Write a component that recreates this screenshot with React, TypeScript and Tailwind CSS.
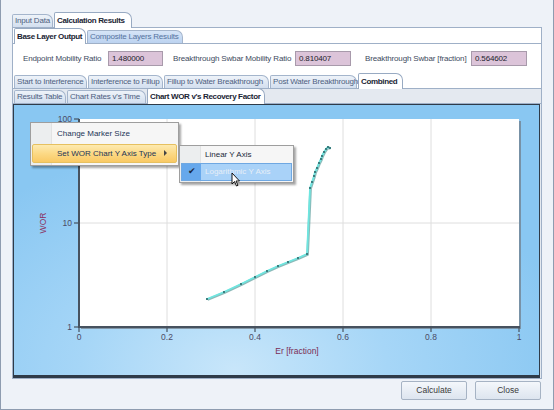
import React from "react";

type TabProps = { label: string; selected?: boolean; w: number; blue?: boolean };

function Tab({ label, selected, w, blue }: TabProps) {
  if (selected) {
    return (
      <div
        style={{ width: w }}
        className="relative z-10 -mb-px h-[16px] shrink-0 whitespace-nowrap rounded-tl-[2px] rounded-tr-[7px] border border-b-0 border-[#98aac2] bg-white px-[2px] pt-[1px] text-[8px] font-bold leading-[13px] tracking-[-0.35px] text-[#1a2433]"
      >
        {label}
      </div>
    );
  }
  return (
    <div
      style={{ width: w }}
      className={
        "h-[13px] shrink-0 whitespace-nowrap rounded-tl-[2px] rounded-tr-[7px] border border-b-0 border-[#a4b5cc] px-[2px] text-[8px] leading-[12px] tracking-[-0.2px] " +
        (blue
          ? "bg-gradient-to-b from-[#d6e5f7] to-[#bcd3f0] text-[#5573a0]"
          : "bg-gradient-to-b from-[#eef3f9] to-[#d3dfef] text-[#4d6080]")
      }
    >
      {label}
    </div>
  );
}

function Field({ value, w }: { value: string; w: number }) {
  return (
    <div
      style={{ width: w }}
      className="h-[15px] shrink-0 border border-[#a89aab] bg-[#dcc4d9] pl-[3px] text-[8px] leading-[13px] text-[#1c1c2c]"
    >
      {value}
    </div>
  );
}

function Chart() {
  const lower = [
    [193, 194],
    [210, 187],
    [227, 179],
    [241, 172],
    [253, 166],
    [264, 161],
    [274, 157],
    [284, 153],
    [293, 149],
  ];
  const upper = [
    [296, 83],
    [298, 77],
    [300, 71],
    [301, 67],
    [303, 63],
    [305, 58],
    [307, 54],
    [308, 51],
    [310, 47],
    [312, 44],
    [314, 42],
    [316, 43],
  ];
  const pts = [...lower, ...upper];
  const ptsStr = pts.map((p) => p.join(",")).join(" ");
  const gx = [153, 241, 329, 417];
  const xt = [
    [65, "0"],
    [153, "0.2"],
    [241, "0.4"],
    [329, "0.6"],
    [417, "0.8"],
    [505, "1"],
  ] as const;
  return (
    <svg width="525" height="270" className="absolute left-0 top-0" style={{ fontFamily: "'Liberation Sans', Arial, sans-serif" }}>
      <rect x="67" y="16" width="440" height="208" fill="#6f7a86" opacity="0.7" />
      <rect x="65" y="14" width="440" height="208" fill="#ffffff" />
      {gx.map((x) => (
        <line key={x} x1={x} y1={14} x2={x} y2={222} stroke="#dedede" strokeWidth="1" />
      ))}
      <line x1={65} y1={118} x2={505} y2={118} stroke="#dedede" strokeWidth="1" />
      <line x1={65} y1={14} x2={65} y2={223} stroke="#47525f" strokeWidth="2" />
      <line x1={64} y1={222} x2={506} y2={222} stroke="#47525f" strokeWidth="2" />
      {[14, 118, 222].map((y) => (
        <line key={y} x1={60} y1={y} x2={65} y2={y} stroke="#47525f" strokeWidth="1.2" />
      ))}
      {xt.map(([x]) => (
        <line key={x} x1={x} y1={222} x2={x} y2={227} stroke="#47525f" strokeWidth="1.2" />
      ))}
      <text x="58" y="17" fontSize="8.5" fill="#4b4b66" textAnchor="end">100</text>
      <text x="58" y="121" fontSize="8.5" fill="#4b4b66" textAnchor="end">10</text>
      <text x="58" y="225" fontSize="8.5" fill="#4b4b66" textAnchor="end">1</text>
      {xt.map(([x, l]) => (
        <text key={l} x={x} y={235} fontSize="8.5" fill="#4b4b66" textAnchor="middle">
          {l}
        </text>
      ))}
      <text x="283" y="249" fontSize="8.5" fill="#7b2d55" textAnchor="middle">Er [fraction]</text>
      <text x="0" y="0" fontSize="8.5" fill="#8b3060" textAnchor="middle" transform="translate(32,118) rotate(-90)">WOR</text>
      <polyline points={ptsStr} fill="none" stroke="#3d8c8a" strokeWidth="2.6" strokeLinejoin="round" opacity="0.6" transform="translate(0.6,0.6)" />
      <polyline points={ptsStr} fill="none" stroke="#6ee6e0" strokeWidth="1.8" strokeLinejoin="round" />
      {pts.map(([x, y], i) => (
        <rect key={i} x={x - 1} y={y - 1} width="2" height="2" fill="#3a7f80" />
      ))}
    </svg>
  );
}

export default function App() {
  return (
    <div
      className="relative flex h-[410px] w-[554px] flex-col overflow-hidden border-b border-l border-r border-[#8e9cb0] bg-[#eef2f8] text-[8px]"
      style={{ fontFamily: "'Liberation Sans', Arial, sans-serif" }}
    >
      <div className="ml-[11px] mt-[12px] flex h-[15px] items-end gap-px">
        <Tab label="Input Data" w={41} />
        <Tab label="Calculation Results" w={78} selected />
      </div>
      <div className="mx-[11px] flex h-[352px] flex-col border border-[#9fb0c7] bg-white">
        <div className="ml-px flex h-[15px] items-end gap-px">
          <Tab label="Base Layer Output" w={72} selected />
          <Tab label="Composite Layers Results" w={96} blue />
        </div>
        <div className="flex flex-1 flex-col border-t border-[#9fb0c7]">
          <div className="flex h-[29px] items-center pl-[10px] tracking-[-0.15px] text-[#3e4a5e]">
            <div className="w-[85px] shrink-0 whitespace-nowrap">Endpoint Mobility Ratio</div>
            <Field value="1.480000" w={55} />
            <div className="ml-[10px] w-[122px] shrink-0 whitespace-nowrap">Breakthrough Swbar Mobility Ratio</div>
            <Field value="0.810407" w={56} />
            <div className="ml-[14px] w-[106px] shrink-0 whitespace-nowrap">Breakthrough Swbar [fraction]</div>
            <Field value="0.564602" w={56} />
          </div>
          <div className="ml-px flex h-[15px] items-end gap-px">
            <Tab label="Start to Interference" w={73} />
            <Tab label="Interference to Fillup" w={75} />
            <Tab label="Fillup to Water Breakthrough" w={105} />
            <Tab label="Post Water Breakthrough" w={87} />
            <Tab label="Combined" w={45} selected />
          </div>
          <div className="flex flex-1 flex-col border-t border-[#9fb0c7] bg-[#e4e9f0]">
            <div className="ml-px flex h-[14px] items-end gap-px">
              <Tab label="Results Table" w={52} />
              <Tab label="Chart Rates v's Time" w={79} />
              <Tab label="Chart WOR v's Recovery Factor" w={118} selected />
            </div>
            <div className="flex flex-1 border-t border-[#9fb0c7]">
              <div className="relative h-full w-[527px] border border-b-[3px] border-[#2f3b49] bg-[radial-gradient(ellipse_65%_85%_at_42%_98%,#c8e6fa_0%,#a6d6f7_45%,#89c7f2_100%)]">
                <Chart />
              </div>
            </div>
          </div>
        </div>
      </div>
      <div className="mt-[2px] flex justify-end gap-[8px] pr-[12px]">
        <button className="h-[19px] w-[66px] rounded-[2px] border border-[#a6b3c4] bg-gradient-to-b from-[#f4f7fb] to-[#dde5ef] text-[8.5px] text-[#3a3a3a]">
          Calculate
        </button>
        <button className="h-[19px] w-[66px] rounded-[2px] border border-[#a6b3c4] bg-gradient-to-b from-[#f4f7fb] to-[#dde5ef] text-[8.5px] text-[#3a3a3a]">
          Close
        </button>
      </div>

      <div className="absolute left-[29px] top-[122px] flex h-[44px] w-[149px] flex-col border border-[#9e9e9e] bg-[#f6f6f6] p-px shadow-[2px_2px_2px_rgba(0,0,0,0.35)]">
        <div className="absolute bottom-0 left-0 top-0 w-[21px] border-r border-[#e2e3e3] bg-[#eceeef]" />
        <div className="relative flex h-[20px] items-center pl-[25px] text-[8px] text-[#1e3556]">Change Marker Size</div>
        <div className="relative flex h-[19px] items-center rounded-[2px] border border-[#e6c060] bg-gradient-to-b from-[#fdeab0] via-[#fcd985] to-[#f9c964] pl-[24px] text-[8px] text-[#1e3556]">
          Set WOR Chart Y Axis Type
          <div className="absolute right-[9px] top-[5px] h-0 w-0 border-b-[3px] border-l-[3px] border-t-[3px] border-b-transparent border-l-[#444] border-t-transparent" />
        </div>
      </div>
      <div className="absolute left-[178px] top-[145px] flex h-[38px] w-[115px] flex-col border border-[#9e9e9e] bg-[#f6f6f6] p-px shadow-[2px_2px_2px_rgba(0,0,0,0.35)]">
        <div className="absolute bottom-0 left-0 top-0 w-[21px] border-r border-[#e2e3e3] bg-[#eceeef]" />
        <div className="relative flex h-[17px] items-center pl-[24px] text-[8px] text-[#1c2a3a]">Linear Y Axis</div>
        <div className="relative flex h-[18px] items-center border border-[#6fa8e2] bg-[#a9d2f8] pl-[23px] text-[8px] text-[#e6eef7]">
          <div className="absolute bottom-0 left-0 top-0 flex w-[19px] items-center justify-center bg-[#66a8ec] text-[9px] text-[#1b2a44]">✔</div>
          Logarithmic Y Axis
        </div>
      </div>
      <svg className="absolute left-[230px] top-[172px]" width="10" height="15" viewBox="0 0 10 15">
        <path d="M1 1 L1 12 L3.5 9.5 L5.5 14 L7 13.3 L5 9 L8.5 9 Z" fill="#ffffff" stroke="#000" strokeWidth="0.9" strokeLinejoin="round" />
      </svg>
    </div>
  );
}
